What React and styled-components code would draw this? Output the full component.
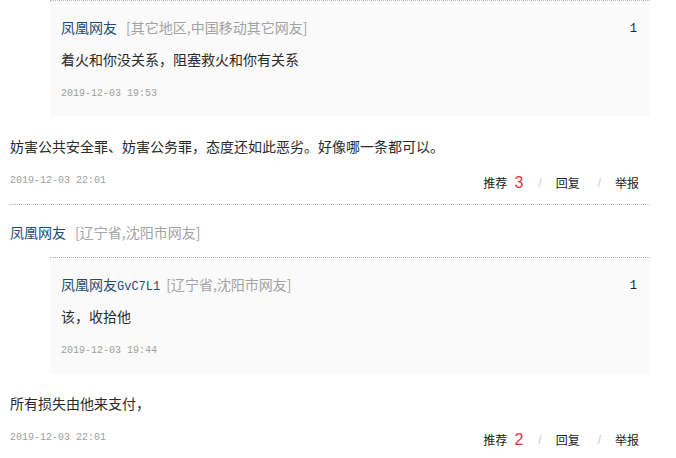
import styled, { createGlobalStyle } from "styled-components";

const GlobalStyle = createGlobalStyle`
    body {
        margin: 0;
        background: #ffffff;
        font-family: "Noto Sans CJK SC", "Liberation Sans", sans-serif;
    }
    * {
        box-sizing: border-box;
    }
`

const Lista = styled.div`
    width: 650px;
    padding-left: 10px;
`

const Comentario = styled.div`
    padding-top: ${props => props.$conUsuario ? "12px" : "0"};
    padding-bottom: 7px;
    border-bottom: ${props => props.$ultimo ? "none" : "1px dotted #b8b8b8"};
`

const Fila = styled.div`
    height: 33px;
    display: flex;
    align-items: center;
    justify-content: space-between;
    padding-bottom: ${props => props.$subir || 0}px;
`

const Usuario = styled.span`
    font-size: 14px;
    color: #1c4d78;
`

const CodigoUsuario = styled.span`
    font-family: "Liberation Mono", monospace;
    font-size: 12px;
`

const Ubicacion = styled.span`
    font-size: 14px;
    color: #a3a3a3;
    margin-left: ${props => props.$espacio}px;
`

const Cita = styled.div`
    margin-left: 40px;
    margin-top: ${props => props.$margen}px;
    background: #fafafa;
    border-top: 1px dotted #b8b8b8;
    padding: 10px 13px 7px 11px;
`

const Texto = styled.div`
    font-size: 14px;
    color: #2a2a2a;
    height: 33px;
    padding-bottom: 4px;
    display: flex;
    align-items: center;
`

const TextoPrincipal = styled(Texto)`
    margin-top: 14px;
`

const Fecha = styled.span`
    font-family: "Liberation Mono", monospace;
    font-size: 10px;
    color: #a0a0a0;
`

const Piso = styled.span`
    font-family: "Liberation Mono", monospace;
    font-size: 12px;
    color: #222;
    padding-top: 6px;
`

const Acciones = styled.div`
    display: flex;
    align-items: center;
    padding-right: 11px;
    padding-top: 4px;
    font-size: 12px;
    color: #222;
`

const Numero = styled.span`
    font-family: "Liberation Sans", sans-serif;
    font-size: 16px;
    color: #e0353f;
    margin: 0 -3px 0 7px;
`

const Barra = styled.span`
    color: #c8c8c8;
    font-family: "Liberation Sans", sans-serif;
    font-size: 12px;
    margin: 0 14px 0 18px;
`

const Cabecera = ({nombre, codigo, lugar}) => (
    <span>
        <Usuario>{nombre}{codigo && <CodigoUsuario>{codigo}</CodigoUsuario>}</Usuario>
        <Ubicacion $espacio={codigo ? 6 : 9}>[{lugar}]</Ubicacion>
    </span>
)

const comentarios = [
    {
        usuario: null,
        cita: {nombre: "凤凰网友", lugar: "其它地区,中国移动其它网友", texto: "着火和你没关系，阻塞救火和你有关系", fecha: "2019-12-03 19:53"},
        texto: "妨害公共安全罪、妨害公务罪，态度还如此恶劣。好像哪一条都可以。",
        fecha: "2019-12-03 22:01",
        votos: 3
    },
    {
        usuario: {nombre: "凤凰网友", lugar: "辽宁省,沈阳市网友"},
        cita: {nombre: "凤凰网友", codigo: "GvC7L1", lugar: "辽宁省,沈阳市网友", texto: "该，收拾他", fecha: "2019-12-03 19:44"},
        texto: "所有损失由他来支付，",
        fecha: "2019-12-03 22:01",
        votos: 2
    }
]

const App = () => {
    return (
    <>
        <GlobalStyle />
        <Lista>
            {comentarios.map((c, i) => (
                <Comentario key={i} $conUsuario={!!c.usuario} $ultimo={i === comentarios.length - 1}>
                    {c.usuario && <Fila $subir={6}><Cabecera nombre={c.usuario.nombre} lugar={c.usuario.lugar} /></Fila>}
                    <Cita $margen={c.usuario ? 7 : 0}>
                        <Fila $subir={4}><Cabecera nombre={c.cita.nombre} codigo={c.cita.codigo} lugar={c.cita.lugar} /><Piso>1</Piso></Fila>
                        <Texto>{c.cita.texto}</Texto>
                        <Fila><Fecha>{c.cita.fecha}</Fecha></Fila>
                    </Cita>
                    <TextoPrincipal>{c.texto}</TextoPrincipal>
                    <Fila>
                        <Fecha>{c.fecha}</Fecha>
                        <Acciones>推荐<Numero>{c.votos}</Numero><Barra>/</Barra>回复<Barra>/</Barra>举报</Acciones>
                    </Fila>
                </Comentario>
            ))}
        </Lista>
    </>)
}

export default App
